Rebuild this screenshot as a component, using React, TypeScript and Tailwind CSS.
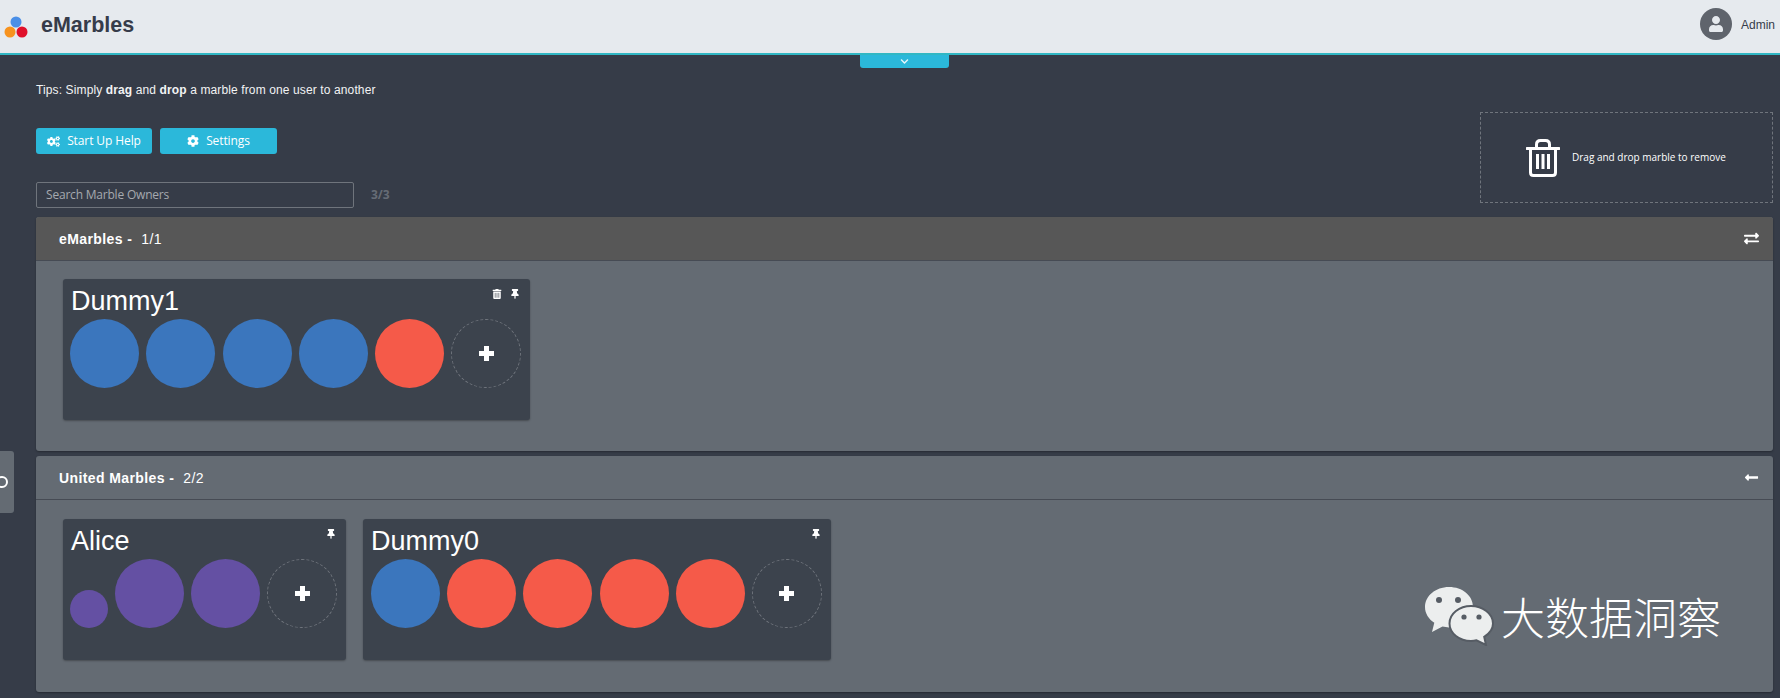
import { FaChevronDown, FaCog, FaCogs, FaExchangeAlt, FaLongArrowAltLeft, FaThumbtack, FaTrashAlt, FaUser } from 'react-icons/fa'

const BLUE = 'bg-[#3b76bd]'
const RED = 'bg-[#f55a49]'
const PURPLE = 'bg-[#6450a3]'

const uiFont = "font-['Open_Sans',sans-serif]"

function Marble({ color, small }: { color: string; small?: boolean }) {
  return <div className={`${color} rounded-full shrink-0 ${small ? 'w-[38px] h-[38px]' : 'w-[69px] h-[69px]'}`} />
}

function AddMarble() {
  return (
    <div className="w-[70px] h-[69px] shrink-0 rounded-full border border-dashed border-[#6f747c] flex items-center justify-center">
      <svg width="15" height="15" viewBox="0 0 15 15" className="mb-[1px]">
        <path d="M5 0h5v5h5v5h-5v5H5v-5H0V5h5z" fill="white" />
      </svg>
    </div>
  )
}

function Card({ name, marbles, canDelete, small, rowClass }: { name: string; marbles: string[]; canDelete?: boolean; small?: boolean; rowClass: string }) {
  return (
    <div className="relative h-[141px] pl-[7px] pr-[9px] pt-[7px] bg-[#3c434d] rounded-[3px] shadow-[0_1px_2px_rgba(0,0,0,0.3)]">
      <div className="absolute right-[10px] top-[10px] flex items-center gap-[8px] text-white">
        {canDelete && <FaTrashAlt size={10} />}
        <FaThumbtack size={10} />
      </div>
      <div className="pl-[1px] h-[30px] text-[27px] leading-[30px] text-white font-['Liberation_Sans',sans-serif]">{name}</div>
      <div className={`mt-[3px] flex items-end ${rowClass}`}>
        {marbles.map((c, i) => (
          <Marble key={i} color={c} small={small && i === 0} />
        ))}
        <AddMarble />
      </div>
    </div>
  )
}

function Panel({ title, count, dark, icon, children, bodyClass }: { title: string; count: string; dark?: boolean; icon: React.ReactNode; children: React.ReactNode; bodyClass: string }) {
  return (
    <section className="bg-[#646b73] rounded-[3px] shadow-[0_1px_2px_rgba(0,0,0,0.3)]">
      <header className={`h-[44px] pl-[23px] pr-[14px] flex items-center justify-between border-b border-[#464b54] rounded-t-[3px] text-white ${dark ? 'bg-[#575757]' : ''}`}>
        <div className="pt-[1px] text-[14px] tracking-[0.4px]">
          <span className="font-bold">{title} -</span>
          <span className="ml-[9px]">{count}</span>
        </div>
        {icon}
      </header>
      <div className={bodyClass}>{children}</div>
    </section>
  )
}

function WeChatMark() {
  return (
    <svg width="70" height="60" viewBox="0 0 70 60" className="shrink-0">
      <path d="M25 1C11.5 1 1 10 1 21c0 6.5 3.6 12 9.3 15.8L8 46l10.5-5.4c2.1.5 4.3.8 6.5.8 13.5 0 24-9 24-20.4S38.500 1 25 1z" fill="#eceeee" />
      <path d="M47 20c-11.500 0-21.500 7.500-21.500 17.500S35.500 55 47 55c1.900 0 3.700-.2 5.500-.7L62 59l-1.800-8.200C65.500 47.500 69 42.700 69 37.500 69 27.500 58.500 20 47 20z" fill="#eceeee" stroke="#565c64" strokeWidth="2" />
      <circle cx="15" cy="14" r="3" fill="#565c64" />
      <circle cx="34" cy="14" r="3" fill="#565c64" />
      <circle cx="40" cy="31" r="2.600" fill="#565c64" />
      <circle cx="55" cy="31" r="2.600" fill="#565c64" />
    </svg>
  )
}

export default function App() {
  return (
    <div className="relative w-[1780px] h-[698px] overflow-hidden bg-[#363c48] font-['Liberation_Sans',sans-serif]">
      <header className="h-[55px] bg-[#e6eaee] border-b-2 border-[#31b7c4] flex items-center justify-between">
        <div className="flex items-center">
          <svg width="32" height="32" viewBox="0 0 32 32" className="ml-[1px] mt-[5px]">
            <circle cx="15" cy="9" r="5.500" fill="#4a8fe7" />
            <circle cx="9" cy="19" r="5.500" fill="#f7931e" />
            <circle cx="21" cy="19" r="5.500" fill="#e0102a" />
          </svg>
          <span className="ml-[8px] -mt-[2px] text-[21.5px] font-bold text-[#363c4a]">eMarbles</span>
        </div>
        <div className="flex items-center -mt-[5px]">
          <div className="w-[32px] h-[32px] rounded-full bg-[#5f646c] flex items-center justify-center text-[#e6eaee]">
            <FaUser size={16} />
          </div>
          <span className="ml-[9px] mt-[2px] text-[12px] text-[#363c4a] w-[39px]">Admin</span>
        </div>
      </header>

      <button className="absolute left-[860px] top-[55px] w-[89px] h-[13px] bg-[#2bb8da] rounded-b-[3px] flex items-center justify-center text-[#e6f7fb]">
        <FaChevronDown size={9} />
      </button>

      <div className="absolute left-0 top-[451px] w-[14px] h-[62px] bg-[#646b73] rounded-r-[3px] overflow-hidden flex items-center">
        <span className="w-[12px] h-[12px] -ml-[4px] rounded-full border-[2.5px] border-white" />
      </div>

      <main className="pl-[36px] pr-[7px] pt-[26px]">
        <p className="h-[18px] text-[12px] leading-[18px] tracking-[0.12px] text-[#f2f3f4]">
          Tips: Simply <b>drag</b> and <b>drop</b> a marble from one user to another
        </p>

        <div className="flex items-start justify-between mb-[9px]">
          <div className={`pt-[29px] ${uiFont}`}>
            <div className="flex gap-[8px] text-[12px] tracking-[-0.1px] text-white">
              <button className="w-[116px] h-[26px] bg-[#2bb8da] rounded-[3px] flex items-center justify-center gap-[7px]">
                <FaCogs size={13} />
                Start Up Help
              </button>
              <button className="w-[117px] h-[26px] bg-[#2bb8da] rounded-[3px] flex items-center justify-center gap-[7px]">
                <FaCog size={12} />
                Settings
              </button>
            </div>
            <div className="mt-[28px] flex items-center">
              <input
                placeholder="Search Marble Owners"
                className="w-[318px] h-[26px] px-[9px] pb-[1px] bg-transparent border border-[#6f747c] rounded-[2px] text-[12px] tracking-[-0.2px] text-white placeholder:text-[#a5a9af] outline-none"
              />
              <span className="ml-[17px] text-[12px] font-bold text-[#666c76]">3/3</span>
            </div>
          </div>

          <div className="mt-[13px] w-[293px] h-[91px] border border-dashed border-[#6f747c] flex items-center pl-[45px] text-white">
            <svg width="34" height="38" viewBox="0 0 34 38" fill="none" stroke="white" strokeWidth="3" className="shrink-0">
              <path d="M1 9.500h32" strokeLinecap="round" />
              <path d="M10.500 9V5.500C10.500 3 12 1.500 14.500 1.500h5C22 1.500 23.500 3 23.500 5.500V9" />
              <path d="M4.500 9.500v24c0 2 1 3 3 3h19c2 0 3-1 3-3v-24" />
              <path d="M11.500 15v15M17 15v15M22.500 15v15" strokeWidth="3" />
            </svg>
            <span className={`ml-[12px] text-[10px] ${uiFont}`}>Drag and drop marble to remove</span>
          </div>
        </div>

        <div className="flex flex-col gap-[5px]">
          <Panel title="eMarbles" count="1/1" dark icon={<FaExchangeAlt size={15} className="text-white" />} bodyClass="h-[190px] pl-[27px] pt-[18px] flex items-start">
            <Card name="Dummy1" canDelete marbles={[BLUE, BLUE, BLUE, BLUE, RED]} rowClass="gap-[7.3px]" />
          </Panel>
          <Panel title="United Marbles" count="2/2" icon={<FaLongArrowAltLeft size={15} className="text-white" />} bodyClass="h-[192px] pl-[27px] pt-[19px] flex items-start gap-[17px]">
            <Card name="Alice" small marbles={[PURPLE, PURPLE, PURPLE]} rowClass="gap-[7px]" />
            <Card name="Dummy0" marbles={[BLUE, RED, RED, RED, RED]} rowClass="gap-[7.2px] pl-[1px]" />
          </Panel>
        </div>
      </main>

      <div className="absolute left-[1424px] top-[586px] flex items-center text-white">
        <WeChatMark />
        <span className="ml-[7px] text-[44px] leading-[60px] font-light font-['Noto_Sans_CJK_SC',sans-serif]">大数据洞察</span>
      </div>
    </div>
  )
}
